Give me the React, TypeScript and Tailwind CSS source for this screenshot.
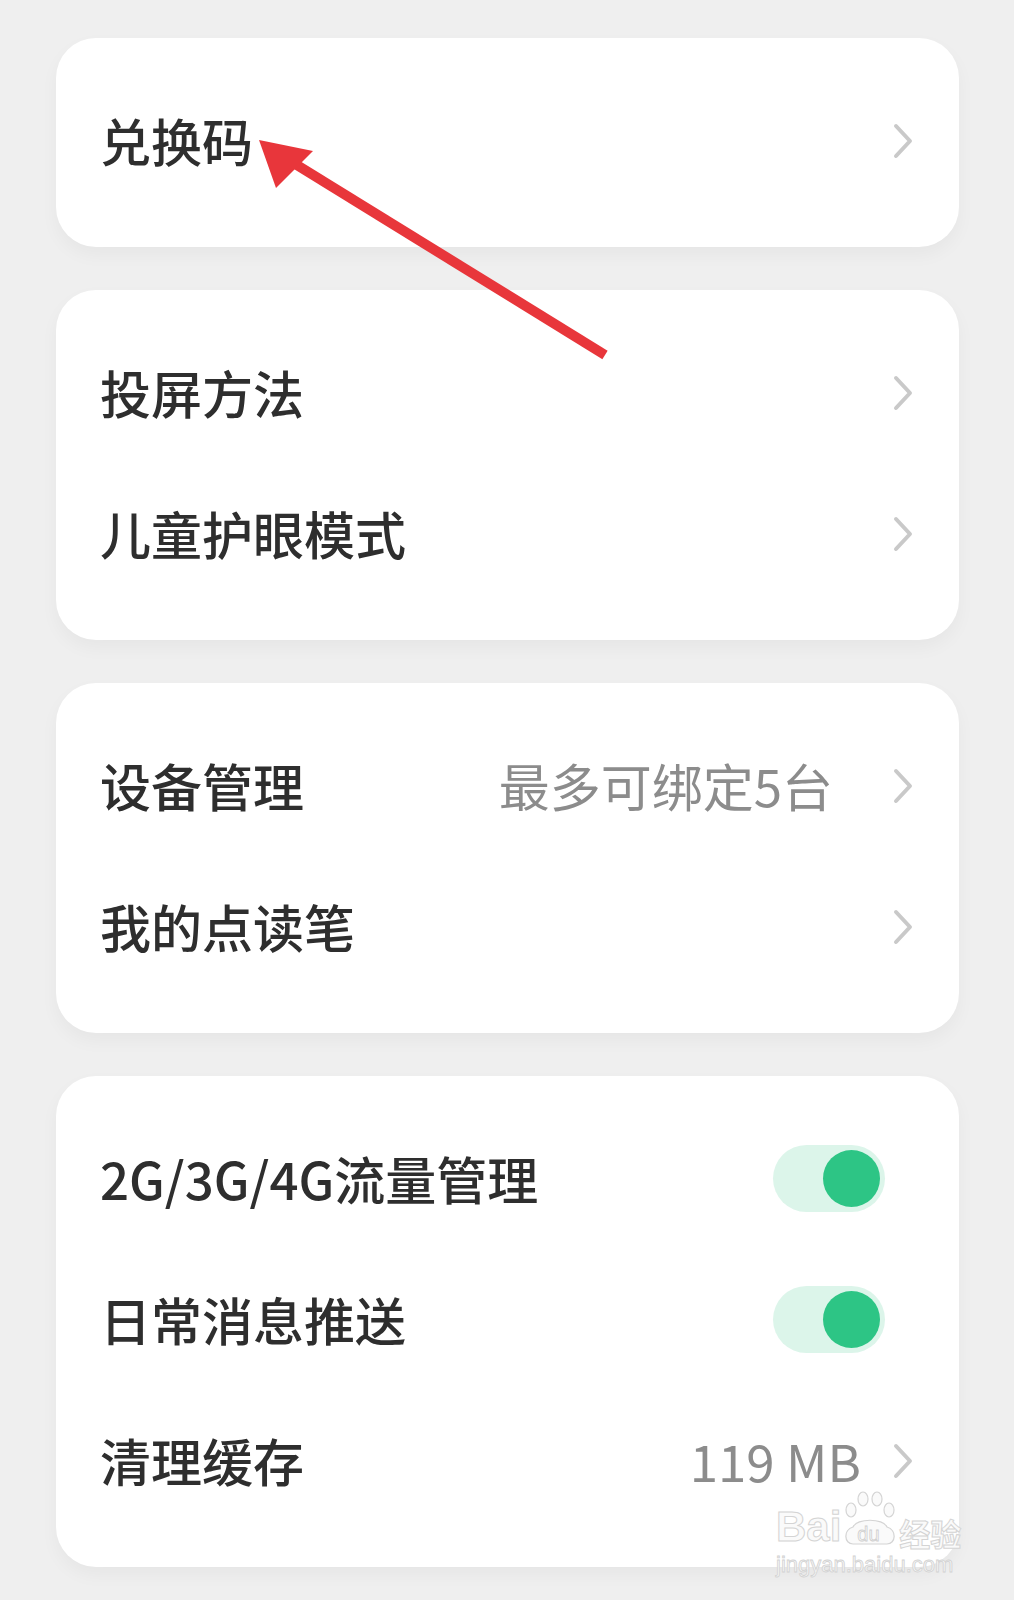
import React from 'react'

const font = { fontFamily: '"Noto Sans CJK SC", "Noto Sans", sans-serif' }
const latin = { fontFamily: '"Liberation Sans", sans-serif' }

function Chevron() {
  return (
    <svg width="20" height="36" viewBox="0 0 20 36" className="shrink-0">
      <path d="M3 3 L17 18 L3 33" fill="none" stroke="#c9c9c9" strokeWidth="4" strokeLinecap="round" strokeLinejoin="round" />
    </svg>
  )
}

function Toggle() {
  return (
    <div className="mr-[28px] flex h-[67px] w-[112px] items-center justify-end rounded-full bg-[#dcf5ea] pr-[5px]">
      <div className="h-[57px] w-[57px] rounded-full bg-[#2dc585]" />
    </div>
  )
}

type Row = { label: string; value?: string; gap?: string; toggle?: boolean }

function Card({ rows }: { rows: Row[] }) {
  return (
    <div className="rounded-[40px] bg-white pb-[36px] pl-[44px] pr-[46px] pt-[32px] shadow-[0_8px_18px_rgba(0,0,0,0.04)]">
      {rows.map((r) => (
        <div key={r.label} className="flex h-[141px] items-center">
          <span className="flex-1 text-[51px] font-medium leading-none text-[#2e2e2e]">{r.label}</span>
          {r.value && <span className={`${r.gap} text-[51px] leading-none text-[#8c8c8c]`}>{r.value}</span>}
          {r.toggle ? <Toggle /> : <Chevron />}
        </div>
      ))}
    </div>
  )
}

function Watermark() {
  return (
    <div className="pointer-events-none absolute left-[776px] top-[1490px] flex flex-col">
      <div className="flex items-end">
        <span className="text-[42px] font-bold leading-none text-[#fafafa] [-webkit-text-stroke:1px_#d4d4d4]" style={latin}>
          Bai
        </span>
        <div className="relative mx-[2px] h-[58px] w-[54px]">
          <svg className="absolute left-0 top-0" width="54" height="58" viewBox="0 0 54 58">
            <g fill="#fafafa" stroke="#d4d4d4" strokeWidth="1.2">
              <ellipse cx="8" cy="20" rx="5" ry="7" />
              <ellipse cx="20" cy="9" rx="5" ry="7" />
              <ellipse cx="34" cy="9" rx="5" ry="7" />
              <ellipse cx="46" cy="20" rx="5" ry="7" />
              <path d="M10 54 C1 54 0 40 10 37 C14 28 40 28 44 37 C54 40 53 54 44 54 Z" />
            </g>
          </svg>
          <span className="absolute left-[14px] top-[34px] text-[20px] leading-none text-[#fafafa] [-webkit-text-stroke:0.8px_#cfcfcf]" style={latin}>
            du
          </span>
        </div>
        <span className="text-[31px] font-bold leading-none text-[#fafafa] [-webkit-text-stroke:1px_#d4d4d4]">经验</span>
      </div>
      <span className="mt-[6px] text-[22px] leading-none text-[#f7f7f7] [-webkit-text-stroke:0.8px_#d2d2d2]" style={latin}>
        jingyan.baidu.com
      </span>
    </div>
  )
}

export default function App() {
  return (
    <div className="relative h-[1600px] w-[1014px] overflow-hidden bg-[#efefef]" style={font}>
      <div className="flex flex-col gap-[43px] pl-[56px] pr-[55px] pt-[38px]">
        <Card rows={[{ label: '兑换码' }]} />
        <Card rows={[{ label: '投屏方法' }, { label: '儿童护眼模式' }]} />
        <Card rows={[{ label: '设备管理', value: '最多可绑定5台', gap: 'mr-[60px]' }, { label: '我的点读笔' }]} />
        <Card
          rows={[
            { label: '2G/3G/4G流量管理', toggle: true },
            { label: '日常消息推送', toggle: true },
            { label: '清理缓存', value: '119 MB', gap: 'mr-[32px]' },
          ]}
        />
      </div>

      <svg className="pointer-events-none absolute left-0 top-0" width="1014" height="600" viewBox="0 0 1014 600">
        <line x1="292" y1="162" x2="605" y2="355" stroke="#e8363b" strokeWidth="10" />
        <polygon points="259,140 313,151 276,188" fill="#e8363b" />
      </svg>

      <Watermark />
    </div>
  )
}
